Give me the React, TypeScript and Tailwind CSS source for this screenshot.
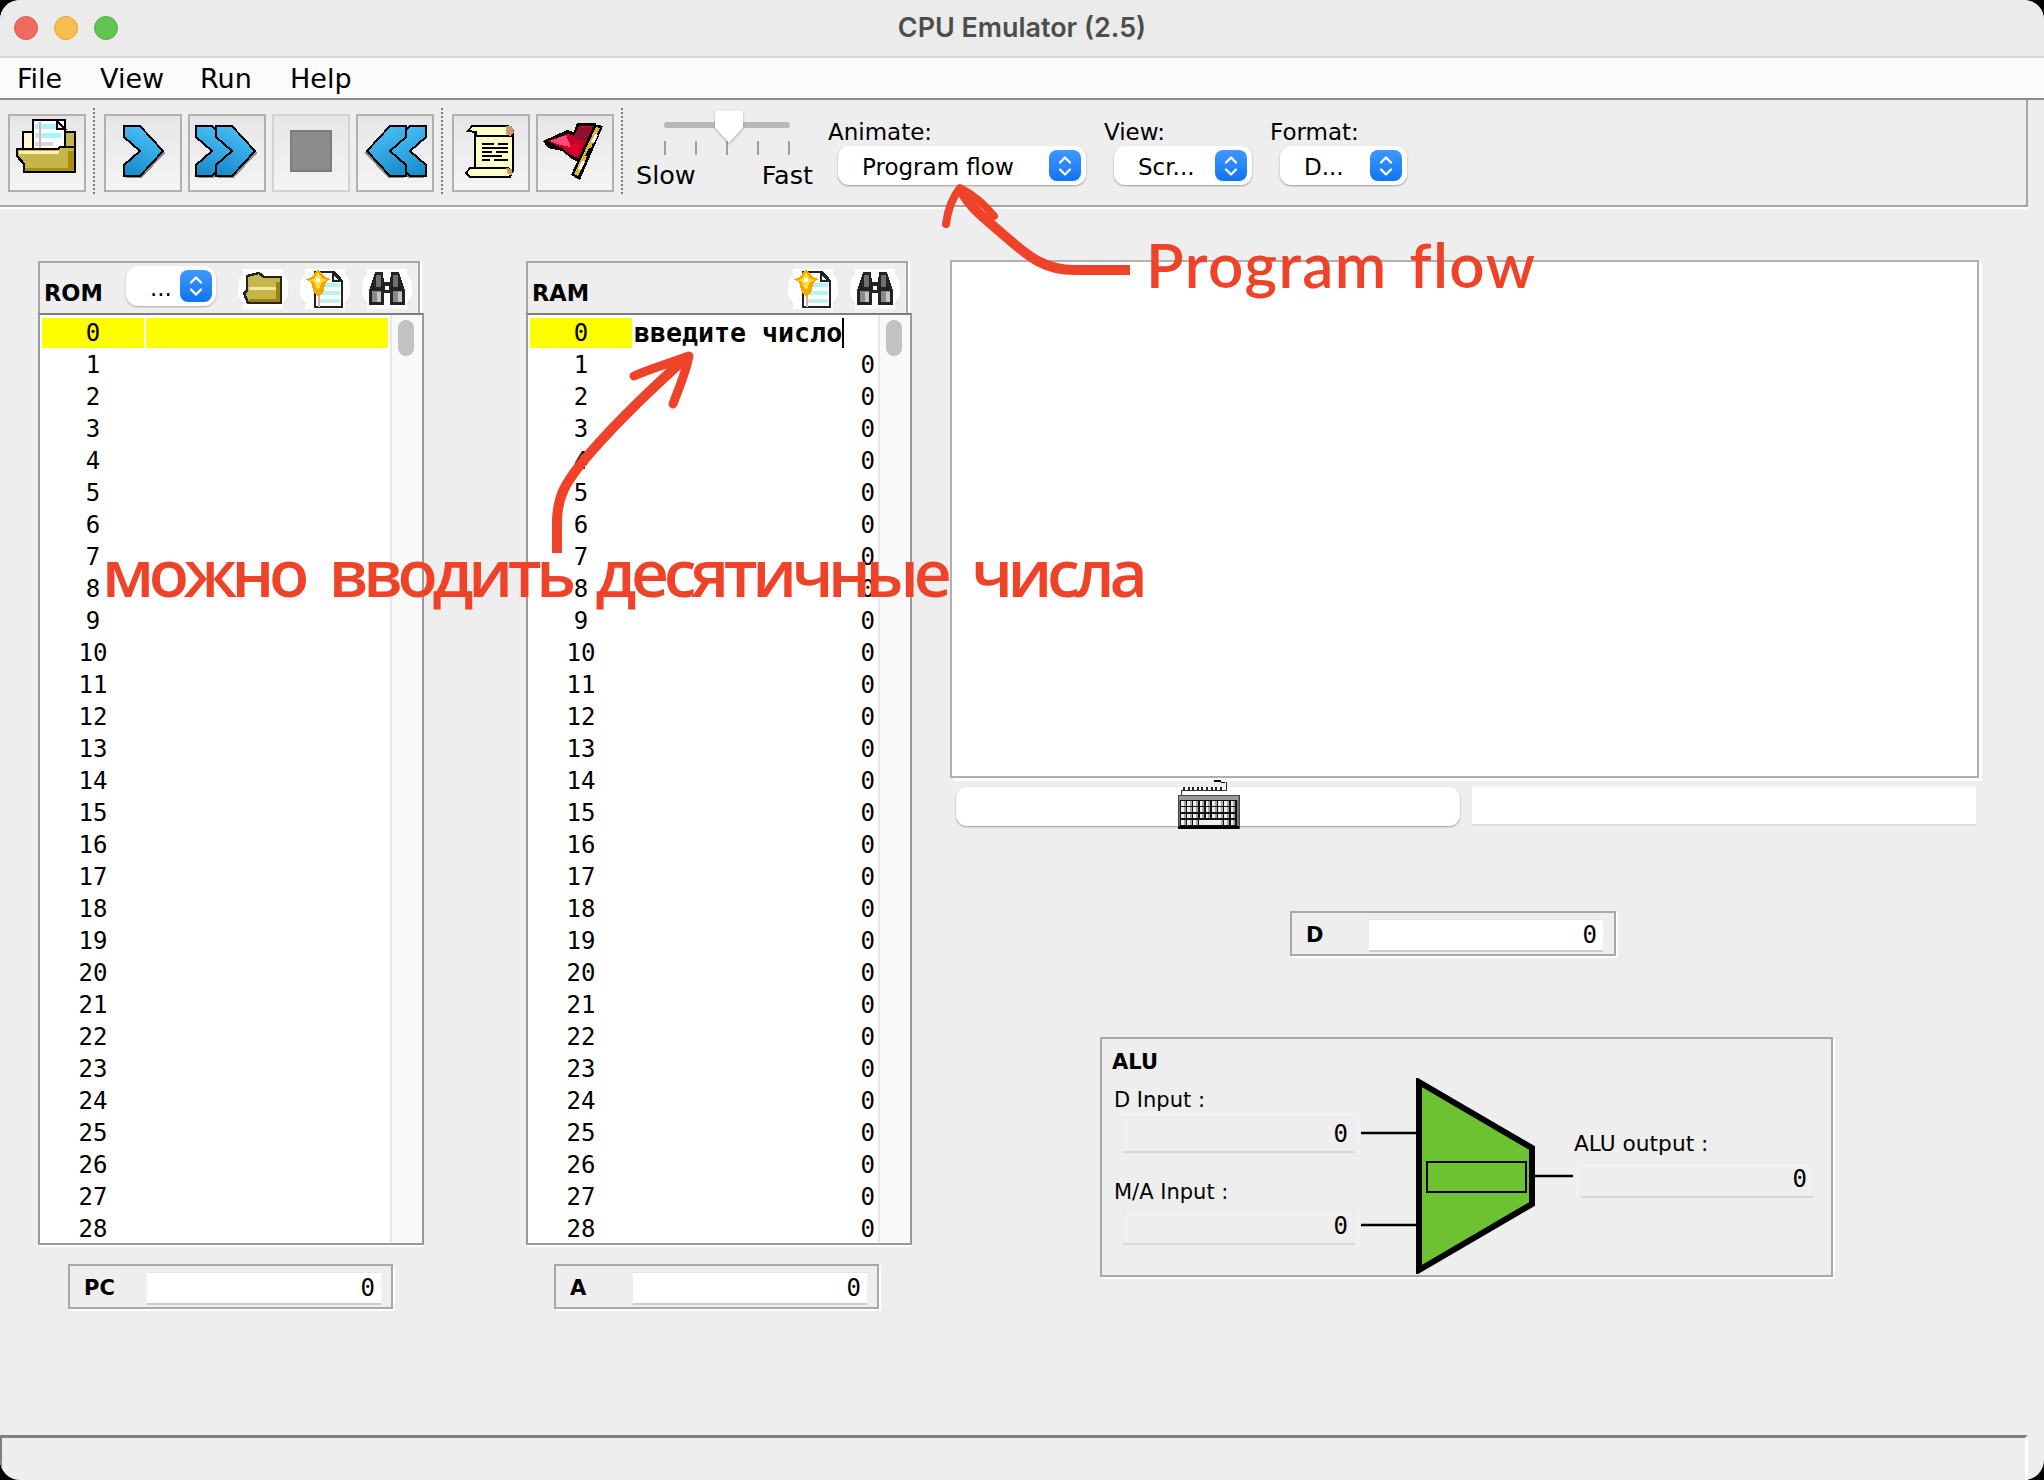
import React from "react";

const sans = "font-['DejaVu_Sans',sans-serif]";
const mono = "font-['DejaVu_Sans_Mono',monospace]";

function Chevrons({ dir, count, id }: { dir: "r" | "l"; count: 1 | 2; id: string }) {
  const shape = (dx: number) => `${dx},12 ${dx + 16},12 ${dx + 39},37 ${dx + 16},62 ${dx},62 ${dx},51 ${dx + 16},37 ${dx},23`;
  const xs = count === 1 ? [20] : [8, 28];
  return (
    <svg viewBox="0 0 78 78" className={`h-[78px] w-[78px] shrink-0 ${dir === "l" ? "-scale-x-100" : ""}`} shapeRendering="crispEdges">
      <defs>
        <linearGradient id={id} x1="0.7" y1="0" x2="0.3" y2="1">
          <stop offset="0" stopColor="#4cc2fa" />
          <stop offset="1" stopColor="#1a8ccc" />
        </linearGradient>
      </defs>
      {xs.map((x) => (
        <polygon key={`s${x}`} points={shape(x)} transform="translate(2 2)" fill="#8d8d8d" />
      ))}
      {xs.map((x) => (
        <polygon key={x} points={shape(x)} fill={`url(#${id})`} stroke="#000" strokeWidth="2" />
      ))}
    </svg>
  );
}

function OpenIcon() {
  return (
    <svg viewBox="0 0 78 78" className="h-[78px] w-[78px] shrink-0" shapeRendering="crispEdges">
      <rect x="15" y="18" width="10" height="26" fill="#fff8d0" stroke="#000" strokeWidth="2" />
      <rect x="52" y="18" width="15" height="39" fill="#c6b34a" stroke="#000" strokeWidth="2" />
      <rect x="25" y="6" width="32" height="31" fill="#fff" stroke="#000" strokeWidth="2" />
      <rect x="27" y="10" width="26" height="5" fill="#a8f5f5" />
      <rect x="27" y="19" width="26" height="5" fill="#a8f5f5" />
      <rect x="27" y="28" width="18" height="4" fill="#d8d8d8" />
      <rect x="31" y="8" width="2" height="28" fill="#f0a8a8" />
      <polygon points="49,7 57,15 49,15" fill="#e8e8e8" stroke="#000" strokeWidth="1.5" />
      <polygon points="9,35 50,35 52,33 67,33 67,58 16,58 16,50 9,42" fill="#c4b64a" stroke="#000" strokeWidth="2.5" />
      <rect x="11" y="37" width="40" height="3" fill="#fff2b0" />
      <rect x="60" y="37" width="6" height="19" fill="#a8900a" />
      <rect x="17" y="54" width="48" height="3" fill="#a8900a" />
    </svg>
  );
}

function StopIcon() {
  return <div className="h-[42px] w-[42px] -translate-y-[2px] border-2 border-[#7c7c7c] bg-[#8c8c8c]" />;
}

function ScrollIcon() {
  const lines = [
    [30, 29, 12], [46, 29, 10], [30, 33, 26], [30, 37, 10], [44, 37, 12],
    [30, 41, 20], [30, 45, 8], [42, 45, 14],
  ];
  return (
    <svg viewBox="0 0 78 78" className="h-[78px] w-[78px] shrink-0" shapeRendering="crispEdges">
      <rect x="23" y="17" width="38" height="40" fill="#ffffc8" stroke="#000" strokeWidth="2" />
      <rect x="24" y="18" width="36" height="5" fill="#cc9a68" />
      <polygon points="20,12 56,12 60,15 60,22 24,22 24,18 16,17" fill="#ffffc8" stroke="#000" strokeWidth="2" />
      <polygon points="54,12 60,12 62,18 58,22 54,20" fill="#cc9a68" />
      <polygon points="18,54 56,54 60,57 58,63 18,63 14,59" fill="#ffffc8" stroke="#000" strokeWidth="2" />
      <polygon points="54,54 60,55 60,61 56,60" fill="#cc9a68" />
      {lines.map(([x, y, w], i) => (
        <rect key={i} x={x} y={y} width={w} height="2" fill="#000" />
      ))}
    </svg>
  );
}

function FlagIcon() {
  return (
    <svg viewBox="0 0 78 78" className="h-[78px] w-[78px] shrink-0" shapeRendering="crispEdges">
      <polygon points="7,27 31,16 38,18 41,9 60,9 55,24 46,50 36,45 26,37 12,34" fill="#000" />
      <polygon points="12,27 32,20 38,22 43,12 57,12 44,45 35,41 26,34" fill="#c80028" />
      <polygon points="14,27 30,21 35,33 24,31" fill="#fb4a78" />
      <polygon points="42,14 55,13 50,27 39,25" fill="#8e102c" />
      <polygon points="36,30 44,30 41,40 34,38" fill="#e0002c" />
      <polygon points="58,10 67,12 44,66 35,61" fill="#000" />
      <polygon points="60,13 64,14 42,62 38,60" fill="#d8b830" />
      <polygon points="59,20 62,21 58,29 55,28" fill="#fff" />
      <polygon points="53,34 56,35 52,43 49,42" fill="#000" />
      <polygon points="46,47 49,48 45,56 42,55" fill="#fff" />
    </svg>
  );
}

function ToolButton({ children, dim }: { children: React.ReactNode; dim?: boolean }) {
  return (
    <div className={`flex h-[78px] w-[78px] shrink-0 items-center justify-center border-2 bg-gradient-to-b from-[#e6e6e6] to-[#f4f4f4] ${dim ? "border-[#d2d2d2]" : "border-[#b0b0b0]"}`}>
      {children}
    </div>
  );
}

function Sep() {
  return <div className="h-[86px] w-0 shrink-0 -translate-y-[2px] border-l-2 border-dotted border-[#808080]" />;
}

function Updown({ className }: { className: string }) {
  return (
    <div className={`flex items-center justify-center rounded-[8px] bg-gradient-to-b from-[#3f98ff] to-[#0b74f1] ${className}`}>
      <svg viewBox="0 0 16 24" className="h-[24px] w-[16px]" fill="none" stroke="#fff" strokeWidth="2.2" strokeLinecap="round" strokeLinejoin="round">
        <path d="M3 8.5 L8 3.5 L13 8.5" />
        <path d="M3 15.5 L8 20.5 L13 15.5" />
      </svg>
    </div>
  );
}

function Select({ text, width, pad }: { text: string; width: string; pad: string }) {
  return (
    <div className={`flex h-[39px] items-center justify-between rounded-[11px] bg-white pr-[5px] shadow-[0_1px_2px_rgba(0,0,0,0.35)] ${width} ${pad}`}>
      <span className={`${sans} translate-y-[2px] text-[23px] leading-none text-black`}>{text}</span>
      <Updown className="h-[31px] w-[32px]" />
    </div>
  );
}

function SmallFolder() {
  return (
    <svg viewBox="0 0 40 40" className="h-[40px] w-[40px] shrink-0 bg-white" shapeRendering="crispEdges">
      <polygon points="4,7 16,4 21,8 38,8 38,34 5,34 1,24 4,22" fill="#c4b64a" stroke="#222" strokeWidth="2.5" />
      <rect x="6" y="18" width="29" height="3" fill="#f4e8a0" />
      <rect x="33" y="13" width="4" height="20" fill="#9a840c" />
      <rect x="6" y="30" width="31" height="3" fill="#9a840c" />
    </svg>
  );
}

function SmallNew() {
  return (
    <svg viewBox="0 0 40 40" className="h-[40px] w-[40px] shrink-0 bg-white" shapeRendering="crispEdges">
      <polygon points="10,3 29,3 37,12 37,38 10,38" fill="#fff" stroke="#222" strokeWidth="2.5" />
      <polygon points="28,4 36,12 28,12" fill="#e8e8e8" stroke="#222" strokeWidth="1.5" />
      <rect x="15" y="14" width="20" height="4" fill="#b4f4f4" />
      <rect x="15" y="22" width="20" height="4" fill="#b4f4f4" />
      <rect x="15" y="30" width="20" height="4" fill="#c8f0e8" />
      <rect x="13" y="20" width="2" height="18" fill="#f0a8a8" />
      <polygon points="13,0 21,9 26,10 21,13 18,24 13,28 9,24 6,13 0,10 6,9" fill="#f4a800" />
      <polygon points="13,3 17,10 22,11 17,13 14,20 12,20 9,13 4,11 9,10" fill="#ffe040" />
      <rect x="11" y="9" width="4" height="4" fill="#fff" />
    </svg>
  );
}

function SmallBinoculars() {
  return (
    <svg viewBox="0 0 40 40" className="h-[40px] w-[40px] shrink-0 bg-white" shapeRendering="crispEdges">
      <polygon points="8,3 16,3 17,14 17,36 2,36 2,22" fill="#222" />
      <polygon points="24,3 32,3 38,22 38,36 23,36 23,14" fill="#222" />
      <rect x="16" y="13" width="8" height="11" fill="#222" />
      <rect x="18" y="17" width="4" height="4" fill="#fff" />
      <rect x="5" y="22" width="9" height="11" fill="#8a8a8a" />
      <rect x="26" y="22" width="9" height="11" fill="#8a8a8a" />
      <rect x="9" y="6" width="5" height="12" fill="#707070" />
      <rect x="26" y="6" width="5" height="12" fill="#707070" />
      <rect x="10" y="23" width="4" height="10" fill="#c4c4c4" />
      <rect x="31" y="23" width="4" height="10" fill="#c4c4c4" />
    </svg>
  );
}

function IconPill({ children }: { children: React.ReactNode }) {
  return (
    <div className="flex h-[34px] w-[50px] shrink-0 items-center justify-center rounded-[13px] bg-white shadow-[0_1px_1px_rgba(0,0,0,0.12)]">
      {children}
    </div>
  );
}

function MemoryPanel({ kind, rowsData }: { kind: "ROM" | "RAM"; rowsData: string }) {
  const rows = Array.from({ length: 29 }, (_, i) => i);
  return (
    <div className="w-[386px] shrink-0">
      <div className="flex h-[54px] w-[382px] border-x-2 border-t-2 border-[#a8a8a8] shadow-[2px_0_0_#fff]">
        <span className={`${sans} ml-[4px] mt-[17px] h-[26px] w-[82px] text-[22.5px] font-bold leading-[26px] text-black`}>{kind}</span>
        {kind === "ROM" ? (
          <>
            <div className="mt-[3px] flex h-[40px] w-[90px] items-center justify-between rounded-[12px] bg-white pl-[24px] pr-[4px] shadow-[0_1px_2px_rgba(0,0,0,0.3)]">
              <span className={`${sans} translate-y-[2px] text-[23px] leading-none text-black`}>...</span>
              <Updown className="h-[32px] w-[32px]" />
            </div>
            <div className="ml-[22px] mt-[9px] flex h-[34px] gap-[12px]">
              <IconPill><SmallFolder /></IconPill>
              <IconPill><SmallNew /></IconPill>
              <IconPill><SmallBinoculars /></IconPill>
            </div>
          </>
        ) : (
          <div className="ml-auto mr-[6px] mt-[9px] flex h-[34px] gap-[12px]">
            <IconPill><SmallNew /></IconPill>
            <IconPill><SmallBinoculars /></IconPill>
          </div>
        )}
      </div>
      <div className="-mt-[2px] flex h-[932px] overflow-hidden border-2 border-[#9a9a9a] border-t-[#7c7c7c] bg-white shadow-[0_2px_0_#fff]">
        <div className={`${mono} w-[350px] shrink-0 pl-[2px] pt-[3px] text-[24px] text-black`}>
          {rows.map((i) => (
            <div key={i} className="flex h-[32px] gap-[2px]">
              <div className={`h-[30px] w-[102px] pt-[1px] text-center leading-[28px] ${i === 0 ? "bg-[#ffff00]" : ""}`}>{i}</div>
              {kind === "ROM" ? (
                <div className={`h-[30px] w-[242px] ${i === 0 ? "bg-[#ffff00]" : ""}`} />
              ) : i === 0 ? (
                <div className="flex h-[30px] w-[242px] items-center">
                  <span className="text-[26.6px] font-bold leading-[30px]">{rowsData}</span>
                  <span className="h-[30px] w-[2px] bg-black" />
                </div>
              ) : (
                <div className="h-[30px] w-[242px] pr-[1px] pt-[1px] text-right leading-[28px]">0</div>
              )}
            </div>
          ))}
        </div>
        <div className="w-[32px] shrink-0 border-l-2 border-[#e8e8e8] bg-[#f9f9f9] pl-[6px] pt-[5px]">
          <div className="h-[36px] w-[16px] rounded-full bg-[#c2c2c2]" />
        </div>
      </div>
    </div>
  );
}

function Register({ label, className }: { label: string; className: string }) {
  return (
    <div className={`flex h-[45px] justify-between border-2 border-[#a8a8a8] pb-[2px] pt-[6px] shadow-[2px_2px_0_#fff] ${className}`}>
      <span className={`${sans} ml-[14px] text-[21px] font-bold leading-[33px] text-black`}>{label}</span>
      <div className={`${mono} h-[33px] w-[234px] border-b-2 border-t border-b-[#cccccc] border-t-[#e4e4e4] bg-white pr-[6px] text-right text-[24px] leading-[30px] text-black`}>0</div>
    </div>
  );
}

function AluField() {
  return (
    <div className={`${mono} h-[36px] w-[233px] border border-b-2 border-[#eaeaea] border-b-[#d8d8d8] pr-[6px] text-right text-[24px] leading-[32px] text-black`}>0</div>
  );
}

function Alu() {
  return (
    <div className="ml-[150px] mt-[81px] flex h-[240px] w-[733px] border-2 border-[#a8a8a8] shadow-[2px_2px_0_#fff]">
      <div className={`${sans} w-[259px] shrink-0 pl-[10px] pt-[1px] text-[21px] text-black`}>
        <div className="h-[44px] font-bold leading-[44px]">ALU</div>
        <div className="ml-[2px] h-[32px] leading-[32px]">D Input :</div>
        <div className="ml-[10px] mt-[1px]"><AluField /></div>
        <div className="ml-[2px] mt-[23px] h-[33px] leading-[32px]">M/A Input :</div>
        <div className="ml-[10px]"><AluField /></div>
      </div>
      <svg viewBox="0 0 212 196" className="mt-[39px] h-[196px] w-[212px] shrink-0">
        <line x1="0" y1="55" x2="56" y2="55" stroke="#000" strokeWidth="2.5" />
        <line x1="0" y1="147" x2="56" y2="147" stroke="#000" strokeWidth="2.5" />
        <line x1="172" y1="98" x2="212" y2="98" stroke="#000" strokeWidth="2.5" />
        <polygon points="58,4 171,70 171,126 58,192" fill="#6cc230" stroke="#000" strokeWidth="6" strokeMiterlimit="10" />
        <rect x="66" y="84" width="99" height="30" fill="none" stroke="#000" strokeWidth="2" />
      </svg>
      <div className={`${sans} pt-[89px] text-[21.7px] text-black`}>
        <div className="ml-[1px] h-[32px] leading-[32px]">ALU output :</div>
        <div className="ml-[8px] mt-[2px]"><AluField /></div>
      </div>
    </div>
  );
}

function Keyboard() {
  const rows = [0, 1, 2, 3];
  return (
    <svg viewBox="0 0 63 50" className="absolute left-[221px] -top-[8px] h-[50px] w-[63px]" shapeRendering="crispEdges">
      <path d="M4 16 V11 H49 V3" fill="none" stroke="#333" strokeWidth="1" />
      {Array.from({ length: 9 }, (_, i) => (
        <rect key={i} x={6 + i * 4.6} y="8" width="2" height="3" fill="#222" />
      ))}
      <rect x="37" y="1" width="7" height="2" fill="#000" />
      <rect x="44" y="3" width="4" height="1" fill="#000" />
      <rect x="1" y="16" width="61" height="33" fill="#777" stroke="#444" strokeWidth="1" />
      <rect x="2" y="17" width="59" height="4" fill="#9a9a9a" />
      <rect x="3" y="21" width="57" height="26" fill="#111" />
      {rows.map((r) =>
        Array.from({ length: 9 }, (_, c) => (
          <g key={`${r}-${c}`}>
            <rect x={4 + c * 6.2} y={22 + r * 6.4} width="4.6" height="4.6" fill="#f0f0f0" />
            <rect x={6.5 + c * 6.2} y={22 + r * 6.4} width="2.1" height="4.6" fill="#a8a8a8" />
          </g>
        ))
      )}
      <rect x="22" y="41" width="20" height="4.6" fill="#eeeeee" />
      <rect x="1" y="47" width="61" height="3" fill="#000" />
    </svg>
  );
}

function Annotations() {
  return (
    <>
      <svg viewBox="0 0 2044 1480" className="pointer-events-none absolute inset-0 h-[1480px] w-[2044px]" fill="none" stroke="#ee4328" strokeLinecap="round" strokeLinejoin="round">
        <path d="M1130 270 L1075 270 C1045 270 1030 258 1005 236 C980 215 968 205 961 190" strokeWidth="10" strokeLinecap="butt" />
        <path d="M946 224 C948 208 952 198 960 188 C972 194 984 204 994 216" strokeWidth="8" />
        <path d="M557 553 L557 520 C558 495 566 483 580 465 C610 428 650 390 688 356" strokeWidth="10" strokeLinecap="butt" />
        <path d="M634 376 C650 369 670 363 689 356 C686 372 679 388 673 404" strokeWidth="9" />
      </svg>
      <div className="absolute left-[1146px] top-[224px] font-['Lato','Open_Sans',sans-serif] text-[62px] font-semibold leading-[80px] tracking-[1.4px] text-[#ee4328] [word-spacing:5px]">
        Program flow
      </div>
      <div className="absolute left-[102px] top-[531px] whitespace-pre font-['Open_Sans',sans-serif] text-[66px] font-semibold leading-[80px] tracking-[-5.3px] text-[#ee4328] [word-spacing:13px]">
        можно вводить десятичные числа
      </div>
    </>
  );
}

export default function App() {
  return (
    <div className="relative h-[1480px] w-[2044px] overflow-hidden bg-black">
      <div className="flex h-[1480px] w-[2044px] flex-col overflow-hidden rounded-[20px] bg-[#eeeeee]">
        <header className="relative flex h-[58px] shrink-0 items-center border-b-2 border-[#d6d6d6] bg-[#ebebeb] pl-[14px]">
          <div className="flex gap-[16px]">
            <span className="h-[24px] w-[24px] rounded-full border border-[#e0584e] bg-[#ef6b60]" />
            <span className="h-[24px] w-[24px] rounded-full border border-[#dfa63e] bg-[#f6be50]" />
            <span className="h-[24px] w-[24px] rounded-full border border-[#52ad46] bg-[#61c554]" />
          </div>
          <div className="absolute inset-x-0 top-0 pt-[10px] text-center font-['Inter',sans-serif] text-[26.9px] font-semibold leading-[34px] text-[#4d4d4d]">
            CPU Emulator (2.5)
          </div>
        </header>
        <nav className={`${sans} flex h-[42px] shrink-0 items-start border-b-2 border-[#8a8a8a] bg-[#fbfbfb] pl-[17px] text-[27px] leading-[41px] text-black`}>
          <span className="w-[83px]">File</span>
          <span className="w-[100px]">View</span>
          <span className="w-[90px]">Run</span>
          <span>Help</span>
        </nav>
        <div className="flex h-[107px] w-[2028px] shrink-0 items-center border-b-2 border-r-2 border-[#a4a4a4] pl-[8px] shadow-[0_2px_0_#fff]">
          <ToolButton><OpenIcon /></ToolButton>
          <div className="ml-[7px] mr-[9px]"><Sep /></div>
          <div className="flex gap-[6px]">
            <ToolButton><Chevrons dir="r" count={1} id="c1" /></ToolButton>
            <ToolButton><Chevrons dir="r" count={2} id="c2" /></ToolButton>
            <ToolButton dim><StopIcon /></ToolButton>
            <ToolButton><Chevrons dir="l" count={2} id="c3" /></ToolButton>
          </div>
          <div className="ml-[7px] mr-[9px]"><Sep /></div>
          <div className="flex gap-[6px]">
            <ToolButton><ScrollIcon /></ToolButton>
            <ToolButton><FlagIcon /></ToolButton>
          </div>
          <div className="ml-[7px]"><Sep /></div>
          <div className={`${sans} relative ml-[13px] mt-[10px] h-[84px] w-[177px] self-start text-[25.5px] leading-[30px] text-black`}>
            <div className="ml-[28px] mt-[12px] h-[6px] w-[126px] rounded-full bg-[#b8b8b8]" />
            <div className="ml-[28px] mt-[13px] flex w-[126px] justify-between">
              {[0, 1, 2, 3, 4].map((t) => (
                <span key={t} className="h-[14px] w-[2px] bg-[#a0a0a0]" />
              ))}
            </div>
            <div className="mt-[5px] flex justify-between">
              <span>Slow</span>
              <span>Fast</span>
            </div>
            <svg viewBox="0 0 32 36" className="absolute -top-[1px] left-[77px] h-[35px] w-[32px] drop-shadow-[0_1px_1px_rgba(0,0,0,0.35)]">
              <path d="M4 1.5 H28 Q30.5 1.5 30.5 4 V19 L16 35 L1.5 19 V4 Q1.5 1.5 4 1.5 Z" fill="#fff" />
            </svg>
          </div>
          <div className={`${sans} ml-[15px] mt-[18px] flex self-start text-[23px] leading-[28px] text-black`}>
            <div className="w-[276px]">
              <div>Animate:</div>
              <div className="ml-[10px]"><Select text="Program flow" width="w-[248px]" pad="pl-[24px]" /></div>
            </div>
            <div className="w-[167px]">
              <div>View:</div>
              <div className="ml-[10px]"><Select text="Scr..." width="w-[138px]" pad="pl-[24px]" /></div>
            </div>
            <div className="-ml-[1px]">
              <div>Format:</div>
              <div className="ml-[10px]"><Select text="D..." width="w-[127px]" pad="pl-[24px]" /></div>
            </div>
          </div>
        </div>
        <main className="flex min-h-0 flex-1 pl-[38px] pt-[54px]">
          <div className="w-[488px] shrink-0">
            <MemoryPanel kind="ROM" rowsData="" />
            <Register label="PC" className="ml-[30px] mt-[19px] w-[325px] pr-[10px]" />
          </div>
          <div className="w-[424px] shrink-0">
            <MemoryPanel kind="RAM" rowsData="введите число" />
            <Register label="A" className="ml-[28px] mt-[19px] w-[325px] pr-[10px]" />
          </div>
          <div className="-mt-[1px] w-[1032px] shrink-0">
            <div className="h-[518px] w-[1029px] border-2 border-[#b0b0b0] bg-white shadow-[3px_3px_0_#fff]" />
            <div className="ml-[6px] mt-[9px] flex gap-[12px]">
              <div className="relative h-[39px] w-[504px] rounded-[11px] bg-white shadow-[0_1px_2px_rgba(0,0,0,0.35)]">
                <Keyboard />
              </div>
              <div className="h-[39px] w-[504px] border-b-2 border-[#dcdcdc] bg-white" />
            </div>
            <Register label="D" className="ml-[340px] mt-[85px] w-[326px] pr-[11px]" />
            <Alu />
          </div>
        </main>
        <footer className="h-[45px] w-[2028px] shrink-0 border-l-2 border-r-[3px] border-t-[3px] border-[#808080] border-r-white" />
      </div>
      <Annotations />
    </div>
  );
}
